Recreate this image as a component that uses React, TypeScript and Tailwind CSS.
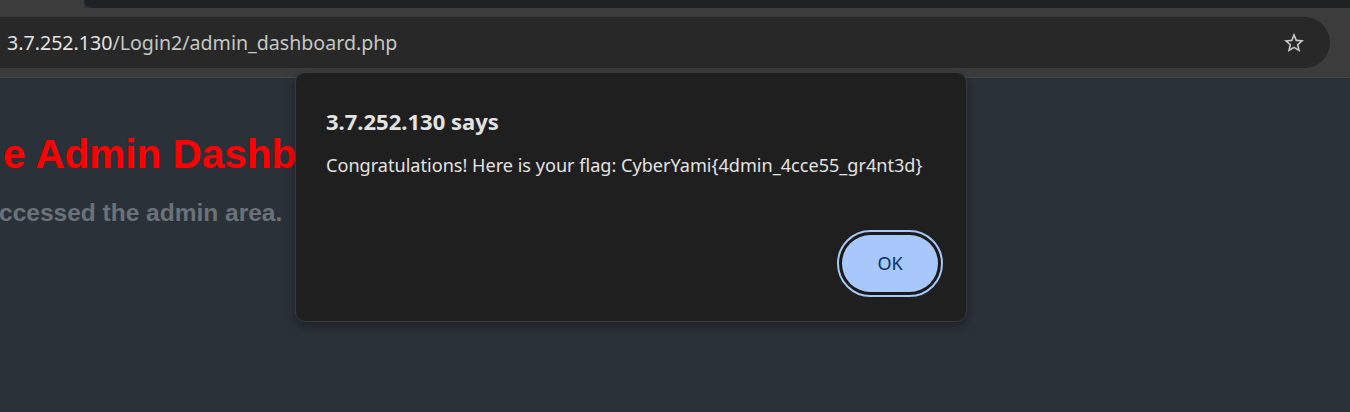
import React from "react";

const StarOutline = () => (
  <svg width="24" height="24" viewBox="0 0 24 24" fill="#c7c7c7">
    <path d="M22 9.24l-7.19-.62L12 2 9.19 8.63 2 9.24l5.46 4.73L5.82 21 12 17.27 18.18 21l-1.63-7.03L22 9.24zM12 15.4l-3.76 2.27 1-4.28-3.32-2.88 4.38-.38L12 6.1l1.71 4.04 4.38.38-3.32 2.88 1 4.28L12 15.4z" />
  </svg>
);

const App = () => {
  return (
    <div className="relative w-[1350px] h-[412px] overflow-hidden bg-[#2b3139]">
      {/* tab strip */}
      <div className="flex h-[8px]">
        <div className="w-[84px] bg-[#3c3c3c]" />
        <div className="flex-1 bg-[#202124] rounded-bl-[10px]" />
      </div>

      {/* toolbar */}
      <div className="h-[70px] bg-[#3c3c3c] pt-[9px] pr-[20px] border-b border-[#474747]">
        <div className="flex h-[51px] items-center justify-between rounded-r-full bg-[#282828] pl-[7px] pr-[24px] font-['Noto_Sans',sans-serif]">
          <div className="text-[19.6px] leading-[26px]">
            <span className="text-[#e3e3e3]">3.7.252.130</span>
            <span className="text-[#c4c7c5]">/Login2/admin_dashboard.php</span>
          </div>
          <StarOutline />
        </div>
      </div>

      {/* page */}
      <div className="pt-[53px] font-['Liberation_Sans',Arial,sans-serif] font-bold">
        <div className="w-[297px] overflow-hidden">
          <h1 className="pl-[3px] text-[40.5px] leading-[46px] text-[#ff0000] whitespace-nowrap">
            e Admin Dashb
          </h1>
        </div>
        <p className="mt-[22px] -ml-[1px] text-[24.5px] leading-[28px] text-[#6c727a] whitespace-nowrap">
          ccessed the admin area.
        </p>
      </div>

      {/* alert dialog */}
      <div className="absolute left-[295px] top-[72px] w-[672px] h-[250px] rounded-[10px] border border-[#3a3a3a] bg-[#1f1f1f] shadow-[0_4px_12px_rgba(0,0,0,0.35)] flex flex-col pl-[30px] pr-[23px] pt-[34px] pb-[24px] font-['Noto_Sans',sans-serif]">
        <div className="text-[22px] leading-[28px] font-bold text-[#e3e3e3]">
          3.7.252.130 says
        </div>
        <div className="mt-[18px] text-[18.1px] leading-[24px] text-[#e3e3e3] whitespace-nowrap">
          Congratulations! Here is your flag: CyberYami{"{"}4dmin_4cce55_gr4nt3d{"}"}
        </div>
        <div className="mt-auto flex justify-end">
          <div className="rounded-full border-2 border-[#a8c7fa] bg-[#1a1a1a] p-[3px]">
            <button className="flex h-[57px] w-[96px] items-center justify-center rounded-full bg-[#a8c7fa] text-[18px] text-[#062e6f]">
              OK
            </button>
          </div>
        </div>
      </div>
    </div>
  );
};

export default App;
